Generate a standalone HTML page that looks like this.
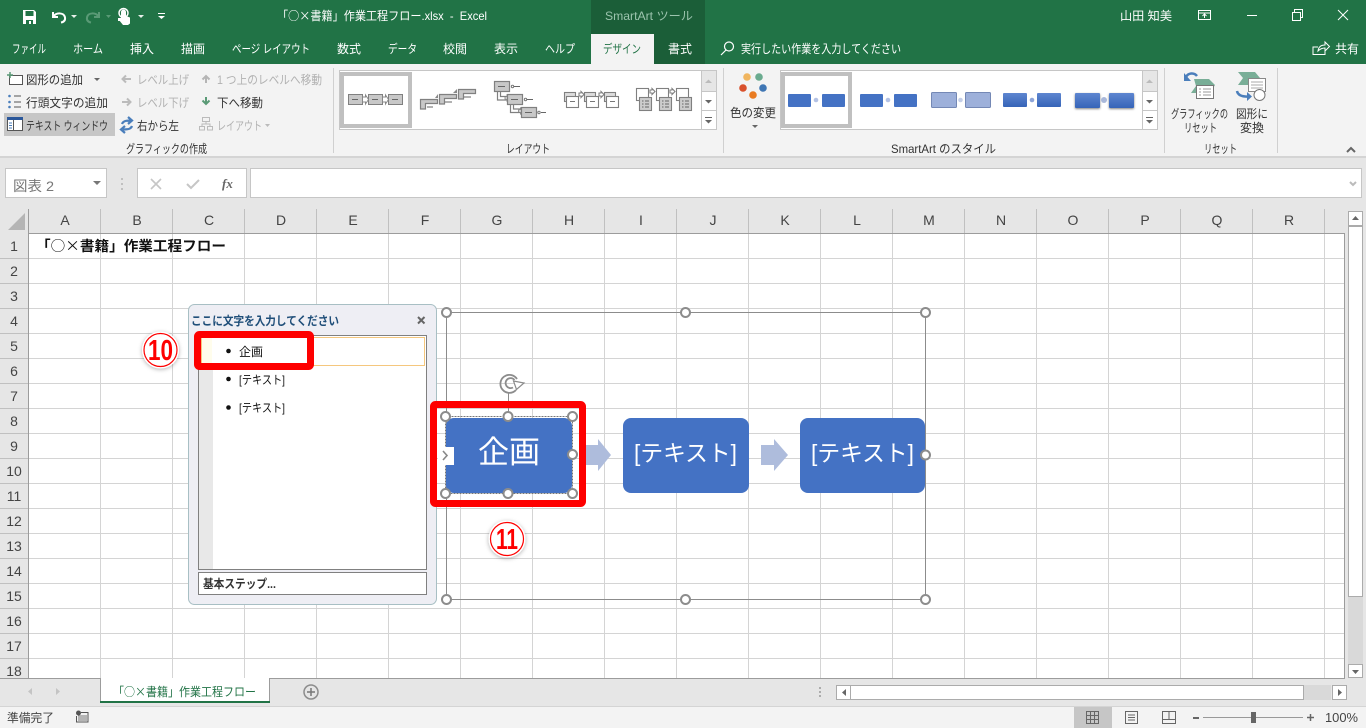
<!DOCTYPE html>
<html lang="ja"><head><meta charset="utf-8"><title>Excel</title>
<style>
html,body{margin:0;padding:0;background:#e6e6e6;overflow:hidden}
svg{display:block}
text{font-family:"Liberation Sans","Noto Sans CJK JP",sans-serif;font-size:12px;fill:#444}
.w{fill:#fff}.g{fill:#b1b1b1}.d{fill:#333}
.h{font-size:14px;fill:#444;text-anchor:middle}
.j{font-family:"Noto Sans CJK JP",sans-serif}
</style></head><body>
<svg width="1366" height="728" viewBox="0 0 1366 728" xmlns="http://www.w3.org/2000/svg">
<defs>
<pattern id="grid" x="29" y="234" width="72" height="25" patternUnits="userSpaceOnUse">
<rect x="71" y="0" width="1" height="25" fill="#d4d4d4"/><rect x="0" y="24" width="72" height="1" fill="#d4d4d4"/>
</pattern>
<filter id="sh" x="-30%" y="-30%" width="160%" height="160%"><feDropShadow dx="0" dy="1" stdDeviation="2" flood-color="#000" flood-opacity=".3"/></filter>
<filter id="sh2" x="-30%" y="-30%" width="160%" height="160%"><feDropShadow dx="0" dy="1" stdDeviation="1" flood-color="#000" flood-opacity=".5"/></filter>
<linearGradient id="gb" x1="0" y1="0" x2="0" y2="1"><stop offset="0" stop-color="#5e86d0"/><stop offset="1" stop-color="#3664b8"/></linearGradient>
</defs>

<!-- title bar -->
<rect width="1366" height="64" fill="#217346"/>
<rect x="591" y="0" width="114" height="64" fill="#1b5e38"/>
<rect x="591" y="34" width="63" height="30" fill="#f3f3f3"/>
<!-- QAT -->
<path d="M23 10h11l2 2v12H23z" fill="#fff"/><rect x="25.500" y="11" width="8" height="5" fill="#217346"/><rect x="26" y="20" width="7" height="4" fill="#217346"/><rect x="29" y="21" width="2" height="3" fill="#fff"/>
<path d="M53 12v5h5M53.500 16.500C56 12.500 64 12 65 17.500c.5 3-1.500 4.500-4 5" fill="none" stroke="#fff" stroke-width="2"/>
<path d="M71 15h6l-3 3z" fill="#e8f0ea"/>
<path d="M99 12v5h-5M98.500 16.500C96 12.500 88 12 87 17.500c-.5 3 1.500 4.500 4 5" fill="none" stroke="#5a9a76" stroke-width="2"/>
<path d="M106 15h5l-2.500 3z" fill="#5a9a76"/>
<path d="M121 18v-6a2.500 2.500 0 0 1 5 0v4l4 1.500v6l-2 1.500h-5l-4-5z" fill="#fff"/><circle cx="123.500" cy="13" r="4.500" fill="none" stroke="#fff" stroke-width="1.500"/><rect x="118" y="18" width="5" height="3" fill="#fff"/>
<path d="M138 15h6l-3 3z" fill="#e8f0ea"/>
<rect x="158" y="13" width="7" height="1" fill="#fff"/><path d="M158 16h7l-3.500 3z" fill="#fff"/>

<text x="277" y="20" class="w" textLength="210" lengthAdjust="spacingAndGlyphs">「<tspan class="j">○×</tspan>書籍」作業工程フロー.xlsx&#160;&#160;-&#160;&#160;Excel</text>
<text x="605" y="20" style="fill:#9cc4ae;font-size:12px" textLength="88" lengthAdjust="spacingAndGlyphs">SmartArt ツール</text>
<text x="1120" y="20" class="w" textLength="52" lengthAdjust="spacingAndGlyphs">山田 知美</text>
<!-- window controls -->
<rect x="1198.500" y="10.500" width="12" height="9" fill="none" stroke="#fff"/><path d="M1198 13h13M1204.500 18v-4M1202.500 16l2-2 2 2" fill="none" stroke="#fff"/>
<rect x="1247" y="15" width="10" height="1" fill="#fff"/>
<rect x="1292.500" y="12.500" width="8" height="8" fill="none" stroke="#fff"/><path d="M1294.500 12v-2.500h8v8H1301" fill="none" stroke="#fff"/>
<path d="M1338 10l10 10M1348 10l-10 10" stroke="#fff" fill="none"/>

<!-- tabs -->
<text x="12" y="53" class="w" textLength="34" lengthAdjust="spacingAndGlyphs">ファイル</text>
<text x="73" y="53" class="w" textLength="30" lengthAdjust="spacingAndGlyphs">ホーム</text>
<text x="130" y="53" class="w" textLength="24" lengthAdjust="spacingAndGlyphs">挿入</text>
<text x="181" y="53" class="w" textLength="24" lengthAdjust="spacingAndGlyphs">描画</text>
<text x="232" y="53" class="w" textLength="78" lengthAdjust="spacingAndGlyphs">ページ レイアウト</text>
<text x="337" y="53" class="w" textLength="24" lengthAdjust="spacingAndGlyphs">数式</text>
<text x="388" y="53" class="w" textLength="29" lengthAdjust="spacingAndGlyphs">データ</text>
<text x="443" y="53" class="w" textLength="24" lengthAdjust="spacingAndGlyphs">校閲</text>
<text x="494" y="53" class="w" textLength="24" lengthAdjust="spacingAndGlyphs">表示</text>
<text x="545" y="53" class="w" textLength="30" lengthAdjust="spacingAndGlyphs">ヘルプ</text>
<text x="603" y="53" style="fill:#217346" textLength="38" lengthAdjust="spacingAndGlyphs">デザイン</text>
<text x="668" y="53" class="w" textLength="24" lengthAdjust="spacingAndGlyphs">書式</text>
<circle cx="729" cy="46.500" r="4.500" fill="none" stroke="#fff" stroke-width="1.200"/><path d="M726 50l-5 5" stroke="#fff" stroke-width="1.200"/>
<text x="741" y="53" class="w" textLength="160" lengthAdjust="spacingAndGlyphs">実行したい作業を入力してください</text>
<path d="M1318 47h-5v7.500h12v-3M1318 51c.5-4 3-6 7-6v-3l4.500 4.500-4.500 4.500v-3c-3 0-5 1-7 3z" fill="none" stroke="#fff"/>
<text x="1335" y="53" class="w" textLength="24" lengthAdjust="spacingAndGlyphs">共有</text>

<!-- ribbon -->
<rect y="64" width="1366" height="92" fill="#f3f3f3"/>
<rect y="156" width="1366" height="2" fill="#d4d4d4"/>
<rect y="158" width="1366" height="51" fill="#e6e6e6"/>
<rect x="333" y="68" width="1" height="85" fill="#d0d0d0"/>
<rect x="723" y="68" width="1" height="85" fill="#d0d0d0"/>
<rect x="1164" y="68" width="1" height="85" fill="#d0d0d0"/>
<rect x="1277" y="68" width="1" height="85" fill="#d0d0d0"/>
<!-- add shape -->
<rect x="9.500" y="75.500" width="13" height="9" fill="#fff" stroke="#555"/><path d="M7 75h6M10 72v6" stroke="#5a9a76" stroke-width="1.500"/>
<text x="26" y="84" class="d" textLength="57" lengthAdjust="spacingAndGlyphs">図形の追加</text>
<path d="M94 78h6l-3 3z" fill="#666"/>
<circle cx="9.500" cy="96" r="1.300" fill="#4a7ebb"/><circle cx="9.500" cy="102" r="1.300" fill="#4a7ebb"/><circle cx="9.500" cy="107" r="1.300" fill="#4a7ebb"/><path d="M14 96h7M14 102h7M14 107h7" stroke="#555"/>
<text x="26" y="107" class="d" textLength="82" lengthAdjust="spacingAndGlyphs">行頭文字の追加</text>
<rect x="4" y="113" width="111" height="23" fill="#c6c6c6"/>
<rect x="7.500" y="117.500" width="15" height="13" fill="#fff" stroke="#555"/><rect x="7" y="117" width="16" height="3" fill="#2b579a"/><rect x="13" y="120" width="1" height="10" fill="#555"/><path d="M9 123h3M9 125.500h3M9 128h3" stroke="#4a7ebb"/>
<text x="26" y="130" class="d" textLength="82" lengthAdjust="spacingAndGlyphs">テキスト ウィンドウ</text>
<path d="M131 79h-8M126 75.500l-3.500 3.500 3.500 3.500" fill="none" stroke="#bbb" stroke-width="2"/>
<text x="137" y="84" class="g" textLength="52" lengthAdjust="spacingAndGlyphs">レベル上げ</text>
<path d="M122 102h8M127 98.500l3.500 3.500-3.500 3.500" fill="none" stroke="#bbb" stroke-width="2"/>
<text x="137" y="107" class="g" textLength="52" lengthAdjust="spacingAndGlyphs">レベル下げ</text>
<path d="M122 124c1-3 4-3.500 9-3.500M128 117l4 3.500-4 3.500M132 126c-1 3-4 3.500-9 3.500M125 126l-4 3.500 4 3.500" fill="none" stroke="#4a7ebb" stroke-width="2.200"/>
<text x="137" y="130" class="d" textLength="42" lengthAdjust="spacingAndGlyphs">右から左</text>
<path d="M206 83v-7M202.500 79.500l3.500-3.500 3.500 3.500" fill="none" stroke="#b5b5b5" stroke-width="2"/>
<text x="217" y="84" class="g" textLength="105" lengthAdjust="spacingAndGlyphs">1 つ上のレベルへ移動</text>
<path d="M206 97v7M202.500 100.500l3.500 3.500 3.500-3.500" fill="none" stroke="#5a9a76" stroke-width="2"/>
<text x="217" y="107" class="d" textLength="46" lengthAdjust="spacingAndGlyphs">下へ移動</text>
<path d="M202.500 117.500h7v4h-7zM199.500 126.500h5v3.500h-5zM207.500 126.500h5v3.500h-5zM206 121.500v3M202 126v-2h8v2" fill="none" stroke="#bbb"/>
<text x="217" y="130" class="g" textLength="45" lengthAdjust="spacingAndGlyphs">レイアウト</text>
<path d="M265 124h5l-2.500 3z" fill="#bbb"/>
<text x="126" y="153" class="d" textLength="81" lengthAdjust="spacingAndGlyphs">グラフィックの作成</text>

<!-- layout gallery -->
<rect x="339.500" y="70.500" width="377" height="59" fill="#fff" stroke="#c6c6c6"/>
<rect x="342" y="74" width="68" height="52" fill="#fff" stroke="#c0c0c0" stroke-width="4"/>
<g fill="#c8c8c8" stroke="#808080">
<rect x="348.500" y="94.500" width="14" height="10"/><rect x="368.500" y="94.500" width="14" height="10"/><rect x="388.500" y="94.500" width="14" height="10"/>
</g>
<path d="M352 99.500h6M372 99.500h6M392 99.500h6" stroke="#666"/>
<path d="M362.500 97h3v-2l3 4.500-3 4.500v-2h-3zM382.500 97h3v-2l3 4.500-3 4.500v-2h-3z" fill="#fff" stroke="#888"/>
<g fill="#c8c8c8" stroke="#808080" stroke-width="1.200"><path d="M420.500 99.500h17v4h-12v5.500h-5zM439.500 94.500h17v4h-12v5.500h-5zM458.500 89.500h17v4h-12v5.500h-5z"/></g>
<path d="M427 107h6M445 102h7M464 97h7" stroke="#666"/>
<path d="M435 98l3-4v4zM453 93l4-4v4z" fill="#888"/>
<path d="M497.500 92v8h9M500.500 92v4.500h6M510.500 104.500v8h10M513.500 104.500v4.500h7" fill="none" stroke="#808080" stroke-width="1.200"/>
<path d="M505 97h2v-2l2.500 3-2.500 3v-2h-2zM518.500 110h2v-2l2.500 3-2.500 3v-2h-2z" fill="#fff" stroke="#808080" stroke-width=".8"/>
<g fill="#c8c8c8" stroke="#808080" stroke-width="1.200"><rect x="494.500" y="81.500" width="15" height="10"/><rect x="507.500" y="94.500" width="15" height="10"/><rect x="521.500" y="107.500" width="15" height="10"/></g>
<path d="M498 86.500h7M511 99.500h7M525 112.500h7M514 86.500h6M527 99.500h6M541 112.500h5" stroke="#666"/>
<circle cx="512.500" cy="86.500" r="1.200" fill="none" stroke="#777"/><circle cx="525.500" cy="99.500" r="1.200" fill="none" stroke="#777"/><circle cx="539" cy="112.500" r="1.200" fill="none" stroke="#777"/>
<g fill="#fff" stroke="#808080" stroke-width="1.100">
<rect x="564.500" y="92.500" width="11" height="9" fill="#ddd"/><rect x="566.500" y="96.500" width="12" height="11"/>
<rect x="584.500" y="92.500" width="11" height="9" fill="#ddd"/><rect x="586.500" y="96.500" width="12" height="11"/>
<rect x="604.500" y="92.500" width="11" height="9" fill="#ddd"/><rect x="606.500" y="96.500" width="12" height="11"/>
<path d="M579 93h2v-1.500l3 3-3 3V96h-2zM599 93h2v-1.500l3 3-3 3V96h-2z"/>
</g>
<path d="M570 101.500h5M590 101.500h5M610 101.500h5" stroke="#777"/>
<g fill="#fff" stroke="#808080" stroke-width="1.100">
<rect x="636.500" y="88.500" width="12" height="12"/><rect x="656.500" y="88.500" width="12" height="12"/><rect x="676.500" y="88.500" width="12" height="12"/>
<rect x="639.500" y="97.500" width="12" height="13" fill="#ccc"/><rect x="659.500" y="97.500" width="12" height="13" fill="#ccc"/><rect x="679.500" y="97.500" width="12" height="13" fill="#ccc"/>
<path d="M650 90h2v-1.500l3 3-3 3V93h-2zM670 90h2v-1.500l3 3-3 3V93h-2z"/>
</g>
<path d="M642 101h1.500M645 101h4M642 104h1.500M645 104h4M642 107h1.500M645 107h4M662 101h1.500M665 101h4M662 104h1.500M665 104h4M662 107h1.500M665 107h4M682 101h1.500M685 101h4M682 104h1.500M685 104h4M682 107h1.500M685 107h4" stroke="#666"/>
<!-- gallery scroll -->
<rect x="701.500" y="70.500" width="15" height="21" fill="#e6e6e6" stroke="#c6c6c6"/>
<rect x="701.500" y="91.500" width="15" height="19" fill="#fff" stroke="#c6c6c6"/>
<rect x="701.500" y="110.500" width="15" height="19" fill="#fff" stroke="#c6c6c6"/>
<path d="M705 83h7l-3.500-3.500z" fill="#bbb"/><path d="M705 100h7l-3.500 3.500z" fill="#666"/><rect x="705" y="117" width="7" height="1" fill="#666"/><path d="M705 120h7l-3.500 3.500z" fill="#666"/>
<text x="506" y="153" class="d" textLength="44" lengthAdjust="spacingAndGlyphs">レイアウト</text>

<!-- colors -->
<circle cx="747" cy="77" r="3.800" fill="#f0b55f"/><circle cx="759" cy="77" r="3.800" fill="#6aab8f"/>
<circle cx="743" cy="88" r="3.800" fill="#d9512c"/><circle cx="763" cy="88" r="3.800" fill="#3f76b4"/>
<circle cx="753" cy="95" r="3.800" fill="#e97b21"/>
<text x="730" y="117" class="d" textLength="46" lengthAdjust="spacingAndGlyphs">色の変更</text>
<path d="M752 125h6l-3 3z" fill="#666"/>

<!-- style gallery -->
<rect x="780.500" y="70.500" width="377" height="59" fill="#fff" stroke="#c6c6c6"/>
<rect x="783" y="74" width="67" height="52" fill="#fff" stroke="#c0c0c0" stroke-width="4"/>
<g fill="#4472c4">
<rect x="788" y="94" width="23" height="13" rx="1"/><rect x="822" y="94" width="23" height="13" rx="1"/>
<rect x="860" y="94" width="23" height="13" rx="1"/><rect x="894" y="94" width="23" height="13" rx="1"/>
<rect x="1003" y="93" width="24" height="14" rx="1" fill="url(#gb)"/><rect x="1037" y="93" width="24" height="14" rx="1" fill="url(#gb)"/>
</g>
<rect x="931.500" y="92.500" width="25" height="15" rx="1" fill="#9db0da" stroke="#7488b5"/><rect x="965.500" y="92.500" width="25" height="15" rx="1" fill="#9db0da" stroke="#7488b5"/>
<rect x="1075" y="93" width="25" height="15" rx="1" fill="url(#gb)" filter="url(#sh2)"/><rect x="1109" y="93" width="25" height="15" rx="1" fill="url(#gb)" filter="url(#sh2)"/>
<circle cx="816" cy="100" r="2.300" fill="#b4c2e4"/><circle cx="888" cy="100" r="2.300" fill="#b4c2e4"/><circle cx="960.500" cy="100" r="2.300" fill="#c5cfe8"/><circle cx="1032" cy="100" r="2.300" fill="#8ea5d8"/><circle cx="1104" cy="100" r="3" fill="#a9b8da"/>
<rect x="1142.500" y="70.500" width="15" height="21" fill="#e6e6e6" stroke="#c6c6c6"/>
<rect x="1142.500" y="91.500" width="15" height="19" fill="#fff" stroke="#c6c6c6"/>
<rect x="1142.500" y="110.500" width="15" height="19" fill="#fff" stroke="#c6c6c6"/>
<path d="M1146 83h7l-3.500-3.500z" fill="#bbb"/><path d="M1146 100h7l-3.500 3.500z" fill="#666"/><rect x="1146" y="117" width="7" height="1" fill="#666"/><path d="M1146 120h7l-3.500 3.500z" fill="#666"/>
<text x="891" y="153" class="d" textLength="105" lengthAdjust="spacingAndGlyphs">SmartArt のスタイル</text>

<!-- reset -->
<path d="M1194 79h15l6 6-5 8h-19l5-7z" fill="#79ae97"/>
<path d="M1186 77c2-4 8-5 11-1" fill="none" stroke="#4a7ebb" stroke-width="2.500"/><path d="M1184 73v8h7z" fill="#4a7ebb"/>
<rect x="1196.500" y="85.500" width="17" height="13" fill="#fff" stroke="#777"/><path d="M1199 89h2M1203 89h8M1199 92h2M1203 92h8M1199 95h2M1203 95h8" stroke="#999"/>
<text x="1171" y="118" class="d" textLength="57" lengthAdjust="spacingAndGlyphs">グラフィックの</text>
<text x="1184" y="132" class="d" textLength="33" lengthAdjust="spacingAndGlyphs">リセット</text>
<path d="M1238 72h17l5 6-5 7h-17l5-7z" fill="#79ae97"/>
<rect x="1248.500" y="78.500" width="17" height="13" fill="#fff" stroke="#888"/><path d="M1251 82h12M1251 85h12M1251 88h12" stroke="#aaa"/>
<circle cx="1259.500" cy="95" r="5.500" fill="#fff" stroke="#777"/>
<path d="M1237 91c1 5 6 6 13 5.500" fill="none" stroke="#4a7ebb" stroke-width="2.500"/><path d="M1247 92l5 4.500-5 4.500z" fill="#4a7ebb"/>
<text x="1236" y="118" class="d" textLength="32" lengthAdjust="spacingAndGlyphs">図形に</text>
<text x="1240" y="132" class="d" textLength="24" lengthAdjust="spacingAndGlyphs">変換</text>
<text x="1204" y="153" class="d" textLength="33" lengthAdjust="spacingAndGlyphs">リセット</text>
<path d="M1347 152l4-4 4 4" fill="none" stroke="#666" stroke-width="2"/>

<!-- formula bar -->
<rect x="5.500" y="168.500" width="101" height="29" fill="#fff" stroke="#c6c6c6"/>
<text x="13" y="191" style="font-size:14px;fill:#777" textLength="41" lengthAdjust="spacingAndGlyphs">図表 2</text>
<path d="M93 181h8l-4 4z" fill="#777"/>
<path d="M122 178v2M122 183v2M122 188v2" stroke="#999"/>
<rect x="137.500" y="168.500" width="109" height="29" fill="#fff" stroke="#c6c6c6"/>
<rect x="250.500" y="168.500" width="1111" height="29" fill="#fff" stroke="#c6c6c6"/>
<path d="M151 179l10 10M161 179l-10 10" stroke="#c6c6c6" stroke-width="1.600"/>
<path d="M187 184l4 4 8-8" fill="none" stroke="#c6c6c6" stroke-width="2"/>
<text x="222" y="188" style="font-family:'Liberation Serif',serif;font-style:italic;font-weight:bold;font-size:13px;fill:#666">fx</text>
<path d="M1350 182l3 3 3-3" fill="none" stroke="#bbb" stroke-width="2"/>

<!-- sheet -->
<rect x="0" y="209" width="1345" height="25" fill="#e6e6e6"/>
<rect x="0" y="234" width="29" height="445" fill="#e6e6e6"/>
<rect x="29" y="234" width="1316" height="445" fill="#fff"/>
<rect x="29" y="234" width="1316" height="445" fill="url(#grid)"/>
<path d="M25 213v17H8z" fill="#b5b5b5"/>
<rect x="28" y="209" width="1" height="470" fill="#9c9c9c"/>
<rect x="28" y="233" width="1317" height="1" fill="#9c9c9c"/>
<rect x="1344" y="233" width="1" height="446" fill="#9c9c9c"/>
<g fill="#c0c0c0">
<rect x="100" y="209" width="1" height="24"/><rect x="172" y="209" width="1" height="24"/><rect x="244" y="209" width="1" height="24"/><rect x="316" y="209" width="1" height="24"/><rect x="388" y="209" width="1" height="24"/><rect x="460" y="209" width="1" height="24"/><rect x="532" y="209" width="1" height="24"/><rect x="604" y="209" width="1" height="24"/><rect x="676" y="209" width="1" height="24"/><rect x="748" y="209" width="1" height="24"/><rect x="820" y="209" width="1" height="24"/><rect x="892" y="209" width="1" height="24"/><rect x="964" y="209" width="1" height="24"/><rect x="1036" y="209" width="1" height="24"/><rect x="1108" y="209" width="1" height="24"/><rect x="1180" y="209" width="1" height="24"/><rect x="1252" y="209" width="1" height="24"/><rect x="1324" y="209" width="1" height="24"/>
<rect x="0" y="258" width="28" height="1"/><rect x="0" y="283" width="28" height="1"/><rect x="0" y="308" width="28" height="1"/><rect x="0" y="333" width="28" height="1"/><rect x="0" y="358" width="28" height="1"/><rect x="0" y="383" width="28" height="1"/><rect x="0" y="408" width="28" height="1"/><rect x="0" y="433" width="28" height="1"/><rect x="0" y="458" width="28" height="1"/><rect x="0" y="483" width="28" height="1"/><rect x="0" y="508" width="28" height="1"/><rect x="0" y="533" width="28" height="1"/><rect x="0" y="558" width="28" height="1"/><rect x="0" y="583" width="28" height="1"/><rect x="0" y="608" width="28" height="1"/><rect x="0" y="633" width="28" height="1"/><rect x="0" y="658" width="28" height="1"/>
</g>
<text class="h" x="65" y="225">A</text><text class="h" x="137" y="225">B</text><text class="h" x="209" y="225">C</text><text class="h" x="281" y="225">D</text><text class="h" x="353" y="225">E</text><text class="h" x="425" y="225">F</text><text class="h" x="497" y="225">G</text><text class="h" x="569" y="225">H</text><text class="h" x="641" y="225">I</text><text class="h" x="713" y="225">J</text><text class="h" x="785" y="225">K</text><text class="h" x="857" y="225">L</text><text class="h" x="929" y="225">M</text><text class="h" x="1001" y="225">N</text><text class="h" x="1073" y="225">O</text><text class="h" x="1145" y="225">P</text><text class="h" x="1217" y="225">Q</text><text class="h" x="1289" y="225">R</text>
<text class="h" x="14" y="251">1</text><text class="h" x="14" y="276">2</text><text class="h" x="14" y="301">3</text><text class="h" x="14" y="326">4</text><text class="h" x="14" y="351">5</text><text class="h" x="14" y="376">6</text><text class="h" x="14" y="401">7</text><text class="h" x="14" y="426">8</text><text class="h" x="14" y="451">9</text><text class="h" x="14" y="476">10</text><text class="h" x="14" y="501">11</text><text class="h" x="14" y="526">12</text><text class="h" x="14" y="551">13</text><text class="h" x="14" y="576">14</text><text class="h" x="14" y="601">15</text><text class="h" x="14" y="626">16</text><text class="h" x="14" y="651">17</text><text class="h" x="14" y="676">18</text>
<text x="36" y="251" style="font-size:14px;font-weight:bold;fill:#111" textLength="190" lengthAdjust="spacingAndGlyphs">「<tspan class="j" style="font-weight:normal">○×</tspan>書籍」作業工程フロー</text>

<!-- v scrollbar -->
<rect x="1345" y="209" width="21" height="470" fill="#e6e6e6"/>
<rect x="1348" y="211" width="15" height="467" fill="#d9d9d9"/>
<rect x="1348.500" y="211.500" width="14" height="14" fill="#fff" stroke="#ababab"/>
<rect x="1348.500" y="226.500" width="14" height="370" fill="#fff" stroke="#ababab"/>
<rect x="1348" y="225" width="15" height="2" fill="#ababab"/>
<rect x="1348.500" y="664.500" width="14" height="13" fill="#fff" stroke="#ababab"/>
<path d="M1352 220h7l-3.500-4z" fill="#666"/><path d="M1352 670h7l-3.500 4z" fill="#666"/>

<!-- text pane -->
<rect x="188.500" y="304.500" width="248" height="300" rx="6" fill="#eeeef4" stroke="#a8bfc4"/>
<text x="191" y="325" style="font-weight:bold;fill:#1f4e79" textLength="148" lengthAdjust="spacingAndGlyphs">ここに文字を入力してください</text>
<path d="M418 317l6.500 6.500M424.500 317l-6.500 6.500" stroke="#666" stroke-width="2"/>
<rect x="198.500" y="335.500" width="228" height="234" fill="#fff" stroke="#808080"/>
<rect x="199" y="336" width="14" height="233" fill="#e8e8e8"/>
<rect x="201.500" y="337.500" width="223" height="28" fill="#fff" stroke="#f5c77e"/>
<rect x="202" y="338" width="10" height="27" fill="#fffdec"/>
<circle cx="228.500" cy="351" r="2.300" fill="#111"/><circle cx="228.500" cy="379" r="2.300" fill="#111"/><circle cx="228.500" cy="407.500" r="2.300" fill="#111"/>
<text x="239" y="356" style="fill:#111" textLength="24" lengthAdjust="spacingAndGlyphs">企画</text>
<text x="239" y="384" style="fill:#111" textLength="46" lengthAdjust="spacingAndGlyphs">[テキスト]</text>
<text x="239" y="412" style="fill:#111" textLength="46" lengthAdjust="spacingAndGlyphs">[テキスト]</text>
<rect x="198.500" y="572.500" width="228" height="22" fill="#fff" stroke="#808080"/>
<text x="203" y="588" style="fill:#333;font-weight:bold" textLength="73" lengthAdjust="spacingAndGlyphs">基本ステップ...</text>

<!-- diagram frame -->
<rect x="446.500" y="312.500" width="479" height="287" fill="none" stroke="#8c8c8c"/>
<path d="M585 445h13v-6l13 16-13 16v-6h-13zM761 445h13v-6l14 16-14 16v-6h-13z" fill="#aebcdc"/>
<rect x="446" y="418" width="126" height="75" rx="8" fill="#4472c4"/>
<rect x="623" y="418" width="126" height="75" rx="8" fill="#4472c4"/>
<rect x="800" y="418" width="125" height="75" rx="8" fill="#4472c4"/>
<text x="478" y="463" class="w" style="font-size:31px" textLength="62" lengthAdjust="spacingAndGlyphs">企画</text>
<text x="634" y="461" class="w" style="font-size:23px" textLength="103" lengthAdjust="spacingAndGlyphs">[テキスト]</text>
<text x="811" y="461" class="w" style="font-size:23px" textLength="103" lengthAdjust="spacingAndGlyphs">[テキスト]</text>
<rect x="445.500" y="416.500" width="127" height="77" fill="none" stroke="#777" stroke-dasharray="2 1"/>
<rect x="438" y="447" width="16" height="18" fill="#fff"/>
<path d="M443 451l4 4.500-4 4.500" fill="none" stroke="#888" stroke-width="1.600"/>
<path d="M508.500 392v24" stroke="#8c8c8c"/>
<path d="M516 390A9 9 0 1 1 517 379M513 387.500A5 5 0 1 1 514.500 380" fill="none" stroke="#8c8c8c" stroke-width="1.800"/>
<path d="M513.500 381l10.500 2-7.500 6.500z" fill="#fff" stroke="#8c8c8c" stroke-width="1.200"/>
<g fill="#fff" stroke="#8c8c8c" stroke-width="2">
<circle cx="446.500" cy="312.500" r="4.500"/><circle cx="685.500" cy="312.500" r="4.500"/><circle cx="925.500" cy="312.500" r="4.500"/><circle cx="925.500" cy="455" r="4.500"/><circle cx="446.500" cy="599.500" r="4.500"/><circle cx="685.500" cy="599.500" r="4.500"/><circle cx="925.500" cy="599.500" r="4.500"/>
<circle cx="445.500" cy="416.500" r="4.500"/><circle cx="508" cy="416.500" r="4.500"/><circle cx="572.500" cy="416.500" r="4.500"/><circle cx="572.500" cy="454.500" r="4.500"/><circle cx="445.500" cy="493.500" r="4.500"/><circle cx="508" cy="493.500" r="4.500"/><circle cx="572.500" cy="493.500" r="4.500"/>
</g>

<!-- red boxes -->
<rect x="197.500" y="334.500" width="113" height="32" rx="2" fill="none" stroke="#fe0000" stroke-width="7"/>
<rect x="433.500" y="404.500" width="149" height="99" rx="2" fill="none" stroke="#fe0000" stroke-width="7"/>
<circle cx="160.500" cy="350" r="18.500" fill="#fff" filter="url(#sh)"/>
<circle cx="160.500" cy="350" r="16.500" fill="#fff" stroke="#fe0000" stroke-width="1.200"/>
<text x="160.500" y="360" style="font-size:29px;font-weight:bold;fill:#fe0000;text-anchor:middle" textLength="25" lengthAdjust="spacingAndGlyphs">10</text>
<circle cx="507" cy="539" r="18.500" fill="#fff" filter="url(#sh)"/>
<circle cx="507" cy="539" r="16.500" fill="#fff" stroke="#fe0000" stroke-width="1.200"/>
<text x="507" y="549" style="font-size:29px;font-weight:bold;fill:#fe0000;text-anchor:middle" textLength="22" lengthAdjust="spacingAndGlyphs">11</text>

<!-- tab bar -->
<rect y="679" width="1366" height="27" fill="#e6e6e6"/>
<rect y="678" width="1345" height="1" fill="#9c9c9c"/>
<path d="M32 688v7l-4-3.500zM56 688v7l4-3.500z" fill="#c4c4c4"/>
<path d="M100.500 678.500V703M269.500 678.500V703" stroke="#9c9c9c" fill="none"/>
<rect x="101" y="678" width="168" height="24" fill="#fff"/>
<rect x="100" y="701" width="170" height="2" fill="#217346"/>
<text x="113" y="696" style="fill:#217346" textLength="143" lengthAdjust="spacingAndGlyphs">「<tspan class="j">○×</tspan>書籍」作業工程フロー</text>
<circle cx="311" cy="692" r="7" fill="none" stroke="#8c8c8c" stroke-width="1.500"/><path d="M307 692h8M311 688v8" stroke="#777" stroke-width="1.500"/>
<path d="M820 691v2M820 695v2M820 687v2" stroke="#999" stroke-width="1.500"/>
<rect x="836.500" y="685.500" width="467" height="14" fill="#fff" stroke="#ababab"/>
<rect x="1304" y="685" width="27" height="15" fill="#d9d9d9"/>
<rect x="836.500" y="685.500" width="14" height="14" fill="#fff" stroke="#ababab"/>
<rect x="1332.500" y="685.500" width="14" height="14" fill="#fff" stroke="#ababab"/>
<path d="M846 689v7l-4-3.500zM1338 689v7l4-3.500z" fill="#666"/>
<rect x="0" y="706" width="1366" height="1" fill="#d4d4d4"/>

<!-- status bar -->
<rect y="707" width="1366" height="21" fill="#f3f3f3"/>
<text x="7" y="722" style="fill:#444" textLength="47" lengthAdjust="spacingAndGlyphs">準備完了</text>
<circle cx="78.500" cy="713" r="2.500" fill="#555"/><path d="M81 712.500h7v9.500H76.500v-6" fill="none" stroke="#555"/><path d="M78 716h9M78 718h9M78 720h9" stroke="#777"/>
<rect x="1074" y="707" width="38" height="21" fill="#c6c6c6"/>
<path d="M1086.500 711.500h12v12h-12zM1086.500 715.500h12M1086.500 719.500h12M1090.500 711.500v12M1094.500 711.500v12" fill="none" stroke="#666"/>
<path d="M1125.500 711.500h12v12h-12zM1128 715h7M1128 717.500h7M1128 720h7" fill="none" stroke="#666"/>
<path d="M1162.500 711.500h13v12h-13zM1162.500 719.500h13M1169 711.500v8" fill="none" stroke="#666"/>
<rect x="1193" y="717" width="6" height="2" fill="#666"/>
<rect x="1203" y="717" width="100" height="1" fill="#999"/>
<rect x="1251" y="712" width="5" height="11" fill="#666"/>
<path d="M1307 717.500h7M1310.500 714v7" stroke="#666" stroke-width="1.500"/>
<text x="1325" y="722" style="font-size:13px;fill:#444" textLength="33" lengthAdjust="spacingAndGlyphs">100%</text>
</svg>
</body></html>
